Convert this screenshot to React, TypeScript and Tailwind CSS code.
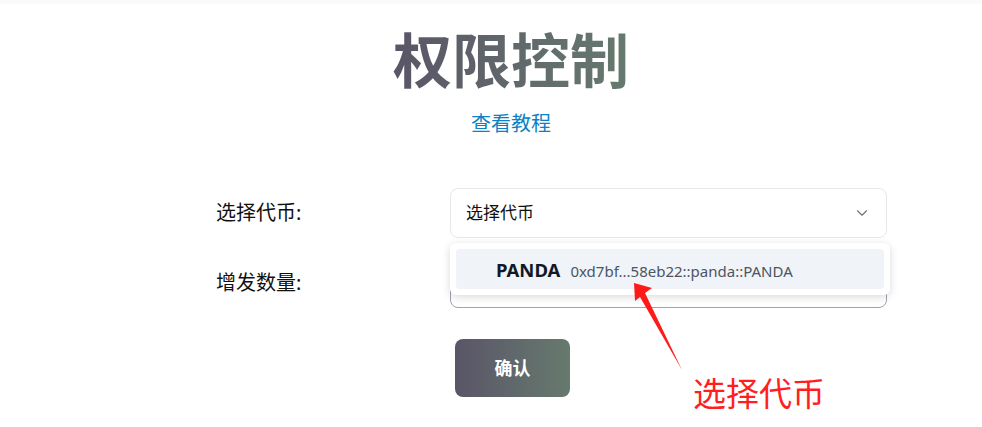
import { ChevronDown } from "lucide-react";

const font = { fontFamily: '"Noto Sans", "Noto Sans CJK SC", sans-serif' };

function App() {
  return (
    <div className="relative w-[982px] h-[427px] bg-white overflow-hidden" style={font}>
      <div className="h-[4px] bg-[#fafafa]" />
      <div className="flex flex-col items-center pt-[20px] pl-[40px]">
        <h1 className="text-[59px] leading-[72px] font-bold bg-gradient-to-r from-[#5a5567] to-[#667a6e] bg-clip-text text-transparent">
          权限控制
        </h1>
        <a className="mt-[15px] text-[20px] leading-[26px] text-[#0b82c4]">查看教程</a>
      </div>

      <div className="flex flex-col pl-[216px] mt-[51px]">
        <div className="flex items-center h-[50px]">
          <label className="w-[234px] text-[20px] text-[#111]">选择代币:</label>
          <div className="relative w-[437px]">
            <div className="flex items-center justify-between h-[50px] px-[15px] border border-[#e5e7eb] rounded-lg">
              <span className="text-[17px] text-[#111]">选择代币</span>
              <ChevronDown className="w-[18px] h-[18px] text-[#6b7280]" strokeWidth={1.5} />
            </div>
            <div className="absolute left-0 top-[55px] w-[440px] bg-white rounded-md shadow-[0_2px_8px_rgba(0,0,0,0.15)] p-[6px] z-10">
              <div className="flex items-baseline gap-[10px] h-[40px] pt-[7px] pl-[40px] bg-[#f0f3f7] rounded">
                <span className="text-[18.5px] font-bold text-[#111827]">PANDA</span>
                <span className="text-[15px] text-[#4b5563]">0xd7bf...58eb22::panda::PANDA</span>
              </div>
            </div>
          </div>
        </div>

        <div className="flex items-center h-[50px] mt-[20px]">
          <label className="w-[234px] text-[20px] text-[#111]">增发数量:</label>
          <input className="w-[437px] h-[50px] border border-[#9ca3af] rounded-lg px-[15px]" />
        </div>

        <div className="flex pl-[239px] mt-[31px]">
          <button className="w-[115px] h-[58px] rounded-lg bg-gradient-to-r from-[#5a5567] to-[#667a6e] text-white font-bold text-[18px]">
            确认
          </button>
        </div>
      </div>

      <svg className="absolute left-0 top-0 pointer-events-none z-20" width="982" height="427">
        <polygon points="634,283 652,288 645,293 682,370 640,297 635,301" fill="#ff1a1a" />
      </svg>
      <div className="absolute left-[693px] top-[371px] text-[33px] leading-[46px] text-[#ff1f1f] z-20">
        选择代币
      </div>
    </div>
  );
}

export default App;
